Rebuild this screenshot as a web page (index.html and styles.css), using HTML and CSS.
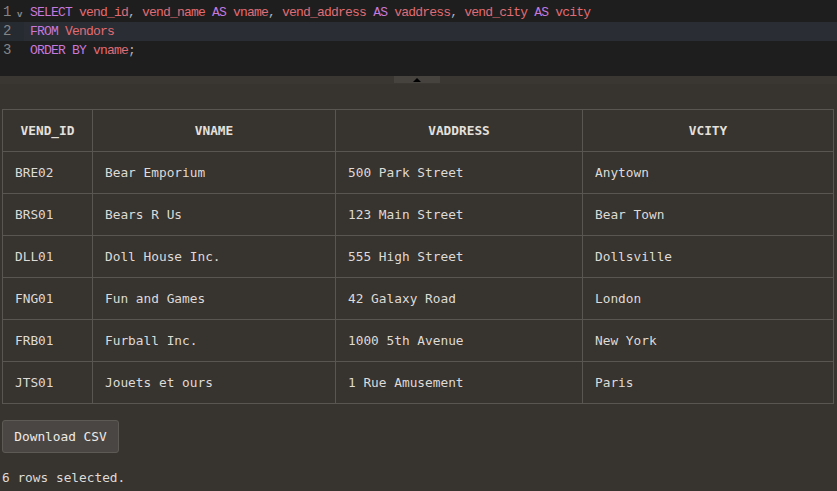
FILE: index.html
```html
<!DOCTYPE html>
<html>
<head>
<meta charset="utf-8">
<link rel="stylesheet" href="styles.css">
</head>
<body>
<div class="editor">
  <div class="line">
    <span class="gutter"><span class="num">1</span><span class="fold">v</span></span>
    <span class="code"><span class="kw">SELECT</span> vend_id<span class="pn">,</span> vend_name <span class="kw">AS</span> vname<span class="pn">,</span> vend_address <span class="kw">AS</span> vaddress<span class="pn">,</span> vend_city <span class="kw">AS</span> vcity</span>
  </div>
  <div class="line active">
    <span class="gutter"><span class="num">2</span><span class="fold"></span></span>
    <span class="code"><span class="kw">FROM</span> Vendors</span>
  </div>
  <div class="line">
    <span class="gutter"><span class="num">3</span><span class="fold"></span></span>
    <span class="code"><span class="kw">ORDER BY</span> vname<span class="pn">;</span></span>
  </div>
</div>
<div class="resizer"><div class="handle"><span class="tri"></span></div></div>
<main class="results">
  <table class="grid">
    <thead>
      <tr><th class="c1">VEND_ID</th><th class="c2">VNAME</th><th class="c3">VADDRESS</th><th class="c4">VCITY</th></tr>
    </thead>
    <tbody>
      <tr><td>BRE02</td><td>Bear Emporium</td><td>500 Park Street</td><td>Anytown</td></tr>
      <tr><td>BRS01</td><td>Bears R Us</td><td>123 Main Street</td><td>Bear Town</td></tr>
      <tr><td>DLL01</td><td>Doll House Inc.</td><td>555 High Street</td><td>Dollsville</td></tr>
      <tr><td>FNG01</td><td>Fun and Games</td><td>42 Galaxy Road</td><td>London</td></tr>
      <tr><td>FRB01</td><td>Furball Inc.</td><td>1000 5th Avenue</td><td>New York</td></tr>
      <tr><td>JTS01</td><td>Jouets et ours</td><td>1 Rue Amusement</td><td>Paris</td></tr>
    </tbody>
  </table>
  <button class="btn">Download CSV</button>
  <p class="status">6 rows selected.</p>
</main>
</body>
</html>
```
FILE: styles.css
```css
html, body {
  margin: 0;
  padding: 0;
  background: #37332f;
  height: 100%;
  overflow: hidden;
}
.editor {
  background: #1e1e1e;
  height: 76px;
  padding-top: 3px;
  box-sizing: border-box;
  font-family: "Liberation Mono", "DejaVu Sans Mono", monospace;
  font-size: 13px;
}
.line {
  display: flex;
  height: 19px;
  line-height: 19px;
  white-space: pre;
}
.line.active {
  background: #2a2d33;
}
.line.active .gutter {
  background: #262a31;
}
.gutter {
  width: 24px;
  display: flex;
  color: #858585;
  font-size: 14px;
  flex: none;
}
.num {
  width: 14px;
  padding-left: 3px;
}
.fold {
  font-size: 9px;
  color: #8a8a8a;
  font-weight: bold;
  padding-top: 3px;
}
.code {
  padding-left: 6px;
  color: #e06c75;
  letter-spacing: -0.8px;
}
.kw { color: #c678dd; }
.pn { color: #abb2bf; }
.resizer {
  height: 8px;
  background: #3a3733;
  display: flex;
  justify-content: center;
}
.handle {
  width: 46px;
  margin-left: -3px;
  height: 7px;
  background: #46423e;
  display: flex;
  justify-content: center;
  align-items: center;
}
.tri {
  width: 0;
  height: 0;
  border-left: 4px solid transparent;
  border-right: 4px solid transparent;
  border-bottom: 4px solid #000;
}
.results {
  padding: 25px 3px 0 2px;
  font-family: "DejaVu Sans Mono", "Liberation Mono", monospace;
  font-size: 12.8px;
  color: #dedad6;
}
.grid {
  border-collapse: collapse;
  width: 832px;
  table-layout: fixed;
}
.grid th, .grid td {
  border: 1px solid #595551;
  height: 42px;
  padding: 0 12px;
  text-align: left;
  box-sizing: border-box;
}
.grid th {
  text-align: center;
  font-weight: bold;
  color: #e4e0dc;
}
.c1 { width: 90px; }
.c2 { width: 243px; }
.c3 { width: 247px; }
.btn {
  margin-top: 16px;
  height: 33px;
  width: 117px;
  background: #4a4643;
  border: 1px solid #5d5955;
  border-radius: 3px;
  color: #eeeae6;
  font-family: "DejaVu Sans Mono", "Liberation Mono", monospace;
  font-size: 12.8px;
  padding: 0;
  display: block;
}
.status {
  margin: 17px 0 0 0;
  line-height: 16px;
}
```
